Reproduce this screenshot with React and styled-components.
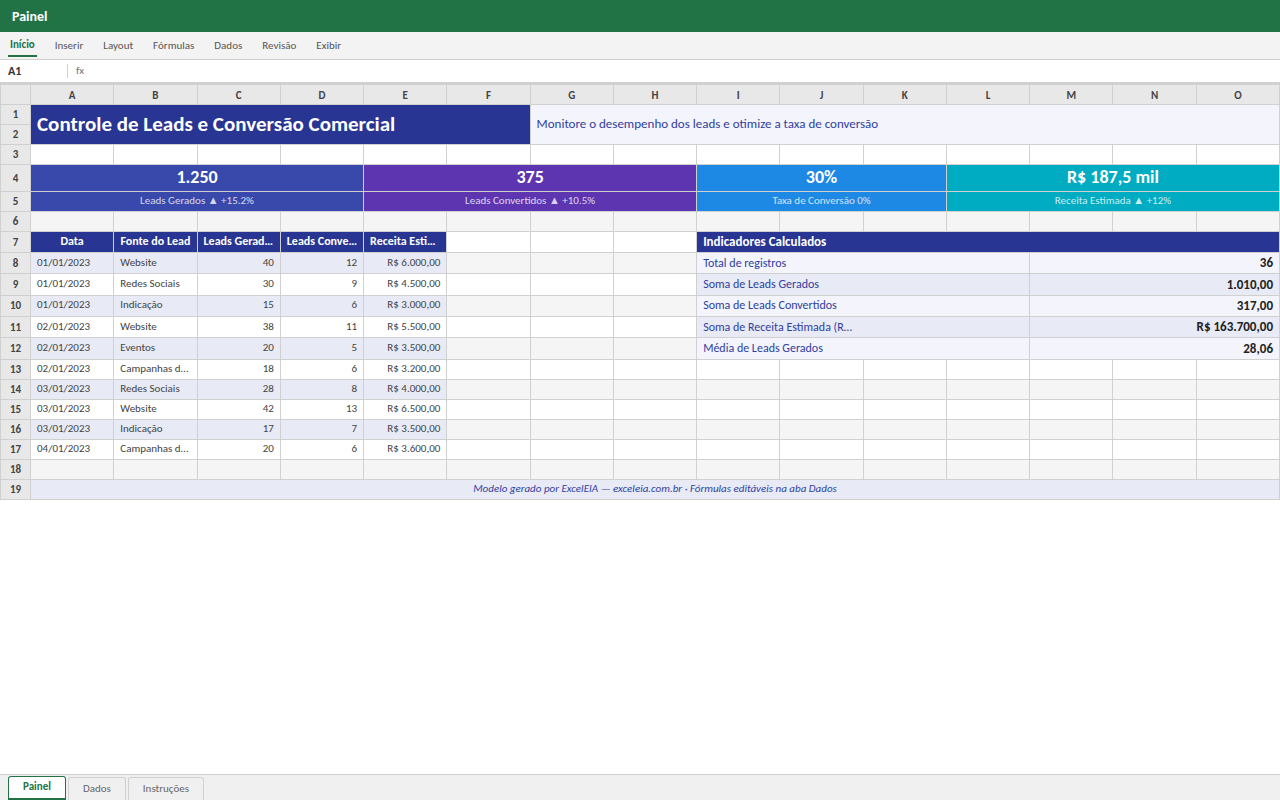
import React from 'react';
import styled, { createGlobalStyle, css } from 'styled-components';

const navy = '#283593';
const indigo = '#303f9f';
const line = '#d0d0d0';
const font = 'Carlito, Lato, "Liberation Sans", sans-serif';

const Global = createGlobalStyle`
  html, body { margin: 0; padding: 0; height: 100%; background: #fff; }
  body { font-family: ${font}; }
  #root { height: 100%; }
`;

const Page = styled.div`
  height: 800px;
  display: flex;
  flex-direction: column;
  overflow: hidden;
`;

const TitleBar = styled.div`
  height: 32px;
  background: #217346;
  color: #fff;
  font-size: 14px;
  font-weight: 700;
  display: flex;
  align-items: center;
  padding: 0 12px;
  flex: none;
`;

const Ribbon = styled.div`
  height: 28px;
  background: #f3f3f3;
  border-bottom: 1px solid ${line};
  box-sizing: border-box;
  display: flex;
  padding: 0 8px;
  flex: none;
`;

const RibbonTab = styled.div`
  font-size: 11px;
  padding: 5px 2px 0;
  margin-right: 16px;
  height: 25px;
  box-sizing: border-box;
  color: #555;
  line-height: 18px;
  ${p => p.$active && css`
    color: #217346;
    font-weight: 700;
    border-bottom: 2px solid #217346;
    padding-top: 4px;
  `}
`;

const FormulaBar = styled.div`
  height: 24px;
  background: #fff;
  border-bottom: 2px solid ${line};
  box-sizing: border-box;
  display: flex;
  align-items: center;
  padding: 0 8px;
  flex: none;
`;

const NameBox = styled.div`
  width: 59px;
  font-size: 12px;
  font-weight: 700;
  color: #333;
`;

const Fx = styled.div`
  border-left: 1px solid ${line};
  padding-left: 8px;
  font-size: 11px;
  color: #777;
  height: 14px;
  line-height: 14px;
`;

const GridWrap = styled.div`
  flex: 1;
  min-height: 0;
  overflow: hidden;
`;

const Sheet = styled.table`
  width: 1280px;
  table-layout: fixed;
  border-collapse: collapse;
  font-size: 11px;
`;

const Cell = styled.td`
  border: 1px solid ${line};
  padding: 0 6px 2px;
  white-space: nowrap;
  overflow: hidden;
  text-overflow: ellipsis;
  color: #444;
  background: ${p => p.$bg || '#fff'};
  text-align: ${p => p.$align || 'left'};
`;

const Corner = styled.th`
  border: 1px solid ${line};
  background: #e8e8e8;
  padding: 0;
  font-size: 11px;
  font-weight: 700;
  color: #444;
  text-align: center;
`;

const ColumnHead = styled(Corner)`
  padding-top: 2px;
`;

const TitleCell = styled(Cell)`
  background: ${navy};
  color: #fff;
  font-size: 21px;
  font-weight: 700;
`;

const Subtitle = styled(Cell)`
  background: #f3f4fc;
  color: ${indigo};
  font-size: 13px;
`;

const KpiValue = styled(Cell)`
  background: ${p => p.$color};
  color: #fff;
  font-size: 18px;
  font-weight: 700;
  text-align: center;
`;

const KpiLabel = styled(Cell)`
  background: ${p => p.$color};
  color: rgba(255, 255, 255, 0.8);
  font-size: 11px;
  text-align: center;
`;

const HeadCell = styled(Cell)`
  background: ${navy};
  color: #fff;
  font-size: 12px;
  font-weight: 700;
  text-align: center;
`;

const PanelHead = styled(Cell)`
  background: ${navy};
  color: #fff;
  font-size: 13px;
  font-weight: 700;
  padding: 0 6px 1px;
`;

const PanelLabel = styled(Cell)`
  color: ${indigo};
  font-size: 12px;
  padding: 0 6px 1px;
`;

const LabelText = styled.span`
  display: block;
  max-width: 150px;
  overflow: hidden;
  text-overflow: ellipsis;
`;

const PanelValue = styled(Cell)`
  color: #222;
  font-size: 13px;
  font-weight: 700;
  text-align: right;
  padding: 0 6px 1px;
`;

const FootCell = styled(Cell)`
  background: #e8eaf6;
  color: ${indigo};
  font-size: 11px;
  font-style: italic;
  text-align: center;
`;

const TabBar = styled.div`
  height: 26px;
  background: #f0f0f0;
  border-top: 1px solid ${line};
  box-sizing: border-box;
  display: flex;
  align-items: flex-end;
  gap: 2px;
  padding: 0 8px;
  flex: none;
`;

const SheetTab = styled.div`
  height: 23px;
  box-sizing: border-box;
  padding: 0 14px;
  border: 1px solid ${line};
  border-bottom: none;
  border-radius: 3px 3px 0 0;
  font-size: 11px;
  line-height: 22px;
  color: #666;
  background: #f0f0f0;
  ${p => p.$active && css`
    background: #fff;
    color: #217346;
    font-weight: 700;
    border: 1px solid #217346;
    border-bottom: 2px solid #217346;
    line-height: 20px;
    height: 24px;
  `}
`;

const letters = 'ABCDEFGHIJKLMNO'.split('');
const gray = '#f5f5f5';
const band = '#e8eaf6';
const soft = '#f3f4fc';

const rows = [
  ['01/01/2023', 'Website', '40', '12', 'R$ 6.000,00'],
  ['01/01/2023', 'Redes Sociais', '30', '9', 'R$ 4.500,00'],
  ['01/01/2023', 'Indicação', '15', '6', 'R$ 3.000,00'],
  ['02/01/2023', 'Website', '38', '11', 'R$ 5.500,00'],
  ['02/01/2023', 'Eventos', '20', '5', 'R$ 3.500,00'],
  ['02/01/2023', 'Campanhas de Marketing', '18', '6', 'R$ 3.200,00'],
  ['03/01/2023', 'Redes Sociais', '28', '8', 'R$ 4.000,00'],
  ['03/01/2023', 'Website', '42', '13', 'R$ 6.500,00'],
  ['03/01/2023', 'Indicação', '17', '7', 'R$ 3.500,00'],
  ['04/01/2023', 'Campanhas de Marketing', '20', '6', 'R$ 3.600,00'],
];

const indicators = [
  ['Total de registros', '36'],
  ['Soma de Leads Gerados', '1.010,00'],
  ['Soma de Leads Convertidos', '317,00'],
  ['Soma de Receita Estimada (R$)', 'R$ 163.700,00'],
  ['Média de Leads Gerados', '28,06'],
];

const kpis = [
  { value: '1.250', label: 'Leads Gerados ▲ +15.2%', span: 4, color: '#3949ab' },
  { value: '375', label: 'Leads Convertidos ▲ +10.5%', span: 4, color: '#5e35b1' },
  { value: '30%', label: 'Taxa de Conversão 0%', span: 3, color: '#1e88e5' },
  { value: 'R$ 187,5 mil', label: 'Receita Estimada ▲ +12%', span: 4, color: '#00acc1' },
];

const heads = ['Data', 'Fonte do Lead', 'Leads Gerados', 'Leads Convertidos', 'Receita Estimada'];
const dataHeights = [21.35, 21.35, 21.35, 21.35, 21.35, 20, 20, 20, 20, 20];

const blanks = (n, bg) => Array.from({ length: n }, (_, i) => <Cell key={i} $bg={bg} />);

export default function App() {
  return (
    <Page>
      <Global />
      <TitleBar>Painel</TitleBar>
      <Ribbon>
        {['Início', 'Inserir', 'Layout', 'Fórmulas', 'Dados', 'Revisão', 'Exibir'].map((t, i) => (
          <RibbonTab key={t} $active={i === 0}>{t}</RibbonTab>
        ))}
      </Ribbon>
      <FormulaBar>
        <NameBox>A1</NameBox>
        <Fx>fx</Fx>
      </FormulaBar>
      <GridWrap>
        <Sheet>
          <colgroup>
            <col style={{ width: 30 }} />
            {letters.map(l => <col key={l} />)}
          </colgroup>
          <thead>
            <tr style={{ height: 20 }}>
              <ColumnHead />
              {letters.map(l => <ColumnHead key={l}>{l}</ColumnHead>)}
            </tr>
          </thead>
          <tbody>
            <tr style={{ height: 20 }}>
              <Corner>1</Corner>
              <TitleCell colSpan={6} rowSpan={2}>Controle de Leads e Conversão Comercial</TitleCell>
              <Subtitle colSpan={9} rowSpan={2}>Monitore o desempenho dos leads e otimize a taxa de conversão</Subtitle>
            </tr>
            <tr style={{ height: 20 }}><Corner>2</Corner></tr>
            <tr style={{ height: 20 }}><Corner>3</Corner>{blanks(15)}</tr>
            <tr style={{ height: 27 }}>
              <Corner>4</Corner>
              {kpis.map(k => <KpiValue key={k.value} colSpan={k.span} $color={k.color}>{k.value}</KpiValue>)}
            </tr>
            <tr style={{ height: 20 }}>
              <Corner>5</Corner>
              {kpis.map(k => <KpiLabel key={k.label} colSpan={k.span} $color={k.color}>{k.label}</KpiLabel>)}
            </tr>
            <tr style={{ height: 20 }}><Corner>6</Corner>{blanks(15, gray)}</tr>
            <tr style={{ height: 21 }}>
              <Corner>7</Corner>
              {heads.map(h => <HeadCell key={h}>{h}</HeadCell>)}
              {blanks(3)}
              <PanelHead colSpan={7}>Indicadores Calculados</PanelHead>
            </tr>
            {rows.map((r, i) => {
              const stripe = i % 2 === 0 ? band : '#fff';
              const blank = i % 2 === 0 ? gray : '#fff';
              const ind = indicators[i];
              return (
                <tr key={i} style={{ height: dataHeights[i] }}>
                  <Corner>{i + 8}</Corner>
                  <Cell $bg={stripe}>{r[0]}</Cell>
                  <Cell $bg={stripe}>{r[1]}</Cell>
                  <Cell $bg={stripe} $align="right">{r[2]}</Cell>
                  <Cell $bg={stripe} $align="right">{r[3]}</Cell>
                  <Cell $bg={stripe} $align="right">{r[4]}</Cell>
                  {blanks(3, blank)}
                  {ind ? (
                    <>
                      <PanelLabel colSpan={4} $bg={i % 2 === 0 ? soft : band}>
                        <LabelText>{ind[0]}</LabelText>
                      </PanelLabel>
                      <PanelValue colSpan={3} $bg={i % 2 === 0 ? soft : band}>{ind[1]}</PanelValue>
                    </>
                  ) : blanks(7, blank)}
                </tr>
              );
            })}
            <tr style={{ height: 20 }}><Corner>18</Corner>{blanks(15, gray)}</tr>
            <tr style={{ height: 20 }}>
              <Corner>19</Corner>
              <FootCell colSpan={15}>Modelo gerado por ExcelEIA — exceleia.com.br · Fórmulas editáveis na aba Dados</FootCell>
            </tr>
          </tbody>
        </Sheet>
      </GridWrap>
      <TabBar>
        {['Painel', 'Dados', 'Instruções'].map((t, i) => (
          <SheetTab key={t} $active={i === 0}>{t}</SheetTab>
        ))}
      </TabBar>
    </Page>
  );
}
